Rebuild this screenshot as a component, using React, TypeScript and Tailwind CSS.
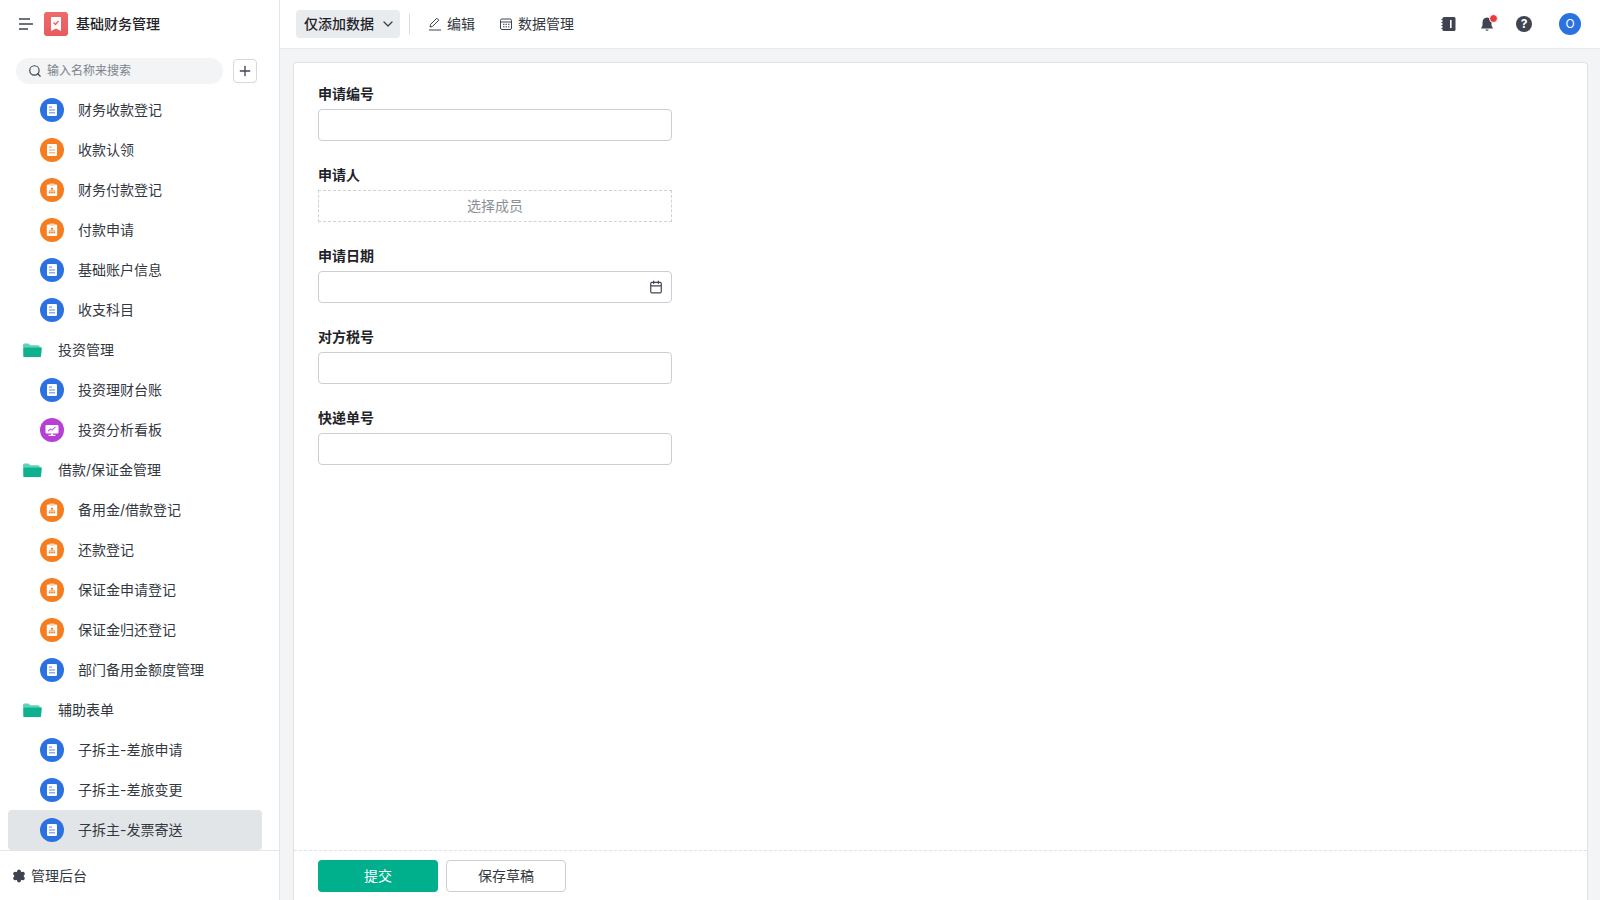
import { Calendar, ChevronDown, Search, Plus, Settings } from "lucide-react";

type Kind = "doc" | "docOrange" | "clip" | "board" | "folder";

const menu: { name: string; kind: Kind; active?: boolean }[] = [
    { name: "财务收款登记", kind: "doc" },
    { name: "收款认领", kind: "docOrange" },
    { name: "财务付款登记", kind: "clip" },
    { name: "付款申请", kind: "clip" },
    { name: "基础账户信息", kind: "doc" },
    { name: "收支科目", kind: "doc" },
    { name: "投资管理", kind: "folder" },
    { name: "投资理财台账", kind: "doc" },
    { name: "投资分析看板", kind: "board" },
    { name: "借款/保证金管理", kind: "folder" },
    { name: "备用金/借款登记", kind: "clip" },
    { name: "还款登记", kind: "clip" },
    { name: "保证金申请登记", kind: "clip" },
    { name: "保证金归还登记", kind: "clip" },
    { name: "部门备用金额度管理", kind: "doc" },
    { name: "辅助表单", kind: "folder" },
    { name: "子拆主-差旅申请", kind: "doc" },
    { name: "子拆主-差旅变更", kind: "doc" },
    { name: "子拆主-发票寄送", kind: "doc", active: true },
];

function Folder() {
    return (
        <svg width="20" height="16" viewBox="0 0 20 16" className="shrink-0">
            <path d="M1 3a1.5 1.5 0 0 1 1.500-1.500h4l1.800 1.800h8.200a1 1 0 0 1 1 1v1H1z" fill="#5fd3ba" />
            <path d="M2.200 5.200h16.600a1 1 0 0 1 1 1.100l-.8 7.900a1 1 0 0 1-1 .9H2.300a1 1 0 0 1-1-.9L1.200 6.300a1 1 0 0 1 1-1.100z" fill="#0db18e" />
        </svg>
    );
}

function MenuIcon({ kind }: { kind: Kind }) {
    if (kind === "doc" || kind === "docOrange") {
        const bg = kind === "doc" ? "#2b71e0" : "#f57c1f";
        const line = kind === "doc" ? "#7aa7ec" : "#f9b27c";
        return (
            <svg width="24" height="24" viewBox="0 0 24 24" className="shrink-0">
                <circle cx="12" cy="12" r="12" fill={bg} />
                <rect x="7" y="6" width="10" height="12" rx="1.200" fill="#fff" />
                <rect x="9" y="8.500" width="3" height="1.300" fill={line} />
                <rect x="9" y="11.300" width="6" height="1.300" fill={line} />
                <rect x="9" y="14.100" width="6" height="1.300" fill={line} />
            </svg>
        );
    }
    if (kind === "clip") {
        return (
            <svg width="24" height="24" viewBox="0 0 24 24" className="shrink-0">
                <circle cx="12" cy="12" r="12" fill="#f57c1f" />
                <rect x="6.800" y="6.500" width="10.400" height="11.500" rx="1.200" fill="#fff" />
                <rect x="9.500" y="5.500" width="5" height="2.200" rx=".5" fill="#fbd3b3" />
                <rect x="11" y="9.800" width="2" height="1.800" fill="#f57c1f" />
                <rect x="8.800" y="13.500" width="1.800" height="1.800" fill="#f57c1f" />
                <rect x="11.100" y="13.500" width="1.800" height="1.800" fill="#f57c1f" />
                <rect x="13.400" y="13.500" width="1.800" height="1.800" fill="#f57c1f" />
                <path d="M9.700 13.500v-1.200h4.600v1.200M12 11.600v.7" stroke="#f57c1f" strokeWidth=".6" fill="none" />
            </svg>
        );
    }
    return (
        <svg width="24" height="24" viewBox="0 0 24 24" className="shrink-0">
            <circle cx="12" cy="12" r="12" fill="#b83fd4" />
            <rect x="5.500" y="7" width="13" height="8.500" rx="1" fill="#fff" />
            <path d="M8 13l2.500-2 1.500 1 3.500-3" stroke="#c76be0" strokeWidth="1.100" fill="none" />
            <rect x="11" y="15.500" width="2" height="1.500" fill="#fff" />
            <rect x="8.500" y="16.800" width="7" height="1.100" rx=".5" fill="#fff" />
        </svg>
    );
}

function Sidebar() {
    return (
        <aside className="w-[280px] h-full shrink-0 flex flex-col bg-white border-r border-[#e3e5e8]">
            <div className="h-12 flex items-center pl-[19px] shrink-0">
                <svg width="14" height="12" viewBox="0 0 14 12">
                    <path d="M0 1h11M0 6h14M0 11h9" stroke="#3f4450" strokeWidth="1.600" />
                </svg>
                <div className="ml-[11px] w-6 h-6 rounded-[3px] bg-gradient-to-b from-[#ec6a6c] to-[#e95a5e] flex items-center justify-center">
                    <svg width="12" height="14" viewBox="0 0 12 14">
                        <path d="M1 0h10v14l-5-2.600L1 14z" fill="#fff" />
                        <path d="M3.500 5.500l2 2 3-3.500" stroke="#e95a5e" strokeWidth="1.200" fill="none" />
                    </svg>
                </div>
                <span className="ml-[8px] text-sm font-medium text-[#1f2329]">基础财务管理</span>
            </div>
            <div className="h-[42px] flex items-start pt-2.5 pl-4 shrink-0">
                <div className="w-[207px] h-[26px] rounded-full bg-[#f2f4f5] flex items-center pl-3">
                    <Search size={14} className="text-[#3f4450] shrink-0" />
                    <span className="ml-[5px] text-xs text-[#7d838c]">输入名称来搜索</span>
                </div>
                <div className="ml-2.5 mt-px w-6 h-6 rounded border border-[#d5d8dc] flex items-center justify-center">
                    <Plus size={16} className="text-[#3f4450]" />
                </div>
            </div>
            <div className="flex-1 overflow-hidden">
                {menu.map((item) =>
                    item.kind === "folder" ? (
                        <div key={item.name} className="h-10 mx-2 pl-3.5 flex items-center gap-4 text-sm text-[#33383f]">
                            <Folder />
                            <span>{item.name}</span>
                        </div>
                    ) : (
                        <div
                            key={item.name}
                            className={`h-10 ml-2 mr-[17px] pl-8 flex items-center gap-3.5 text-sm text-[#33383f] rounded ${item.active ? "bg-[#e2e5e8]" : ""}`}
                        >
                            <MenuIcon kind={item.kind} />
                            <span>{item.name}</span>
                        </div>
                    )
                )}
            </div>
            <div className="h-[50px] shrink-0 border-t border-[#e3e5e8] flex items-center pl-3 gap-[5px] text-sm text-[#33383f]">
                <Settings size={14} fill="#3f4450" className="text-[#3f4450]" />
                <span>管理后台</span>
            </div>
        </aside>
    );
}

function TopBar() {
    return (
        <header className="h-[49px] shrink-0 bg-white border-b border-[#e7e9eb] flex items-center pl-4 pr-[19px] text-sm text-[#33383f]">
            <div className="h-7 w-[104px] rounded bg-[#e9ecef] flex items-center pl-2 gap-1.5 font-medium text-[#1f2329]">
                <span>仅添加数据</span>
                <ChevronDown size={16} className="text-[#3f4450]" />
            </div>
            <div className="w-px h-5 bg-[#d9dcdf] ml-[9px] mr-[18px]" />
            <svg width="14" height="14" viewBox="0 0 14 14" fill="none" stroke="#3f4450" strokeWidth="1">
                <path d="M2 10l.6-2.600L8.800 1.200l2 2L4.600 9.400z" />
                <path d="M1 13h12" />
            </svg>
            <span className="ml-[5px]">编辑</span>
            <svg width="14" height="14" viewBox="0 0 14 14" fill="none" stroke="#3f4450" strokeWidth="1" className="ml-6">
                <rect x="1.500" y="2" width="11" height="10.500" rx="1.500" />
                <path d="M1.500 5h11M4 7.300h1.500M6.500 7.300h1.500M9 7.300h1.500M4 9.800h1.500M6.500 9.800h1.500M9 9.800h1.500" />
            </svg>
            <span className="ml-[5px]">数据管理</span>
            <div className="ml-auto flex items-center">
                <svg width="16" height="16" viewBox="0 0 16 16">
                    <rect x="1.500" y="1" width="13" height="14" rx="1.500" fill="#3f4450" />
                    <path d="M.5 3.500h2M.5 6.500h2M.5 9.500h2M.5 12.500h2" stroke="#3f4450" strokeWidth="1" />
                    <rect x="9" y="4" width="1.600" height="8" fill="#fff" />
                </svg>
                <div className="relative ml-[22px] w-4 h-4">
                    <svg width="16" height="16" viewBox="0 0 16 16">
                        <path d="M8 1.500c-3 0-4.500 2.200-4.500 5v3L2 12.500h12l-1.500-3v-3c0-2.800-1.500-5-4.500-5z" fill="#3f4450" />
                        <path d="M6.300 13.500a1.800 1.800 0 0 0 3.400 0z" fill="#3f4450" />
                    </svg>
                    <div className="absolute -top-0.5 right-[-3px] w-[7px] h-[7px] rounded-full bg-[#ea3b3b] border border-white box-content" />
                </div>
                <div className="ml-[21px] w-4 h-4 rounded-full bg-[#3f4450] text-white text-xs font-bold flex items-center justify-center">?</div>
                <div className="ml-[27px] w-[22px] h-[22px] rounded-full bg-[#2b71e0] text-white text-xs flex items-center justify-center">O</div>
            </div>
        </header>
    );
}

function Field({ label, children }: { label: string; children: React.ReactNode }) {
    return (
        <div className="mb-[23px]">
            <div className="h-[22px] mb-1 text-sm leading-[22px] font-semibold text-[#1f2329]">{label}</div>
            {children}
        </div>
    );
}

const inputCls = "w-[354px] h-8 rounded border border-[#ccced2] bg-white";

export default function App() {
    return (
        <div className="w-full h-screen flex overflow-hidden bg-[#f2f4f5] font-['Inter','Noto_Sans_CJK_SC',sans-serif]">
            <Sidebar />
            <div className="flex-1 flex flex-col min-w-0">
                <TopBar />
                <main className="flex-1 min-h-0 pt-[13px] pl-[13px] pr-[12px]">
                    <div className="h-full bg-white border border-b-0 border-[#dfe1e4] rounded-t flex flex-col">
                        <div className="flex-1 pt-5 pl-6">
                            <Field label="申请编号">
                                <div className={inputCls} />
                            </Field>
                            <Field label="申请人">
                                <div className="w-[354px] h-8 border border-dashed border-[#cfd1d5] flex items-center justify-center text-sm text-[#8b9097]">
                                    选择成员
                                </div>
                            </Field>
                            <Field label="申请日期">
                                <div className={`${inputCls} flex items-center justify-end pr-2`}>
                                    <Calendar size={14} className="text-[#3f4450]" />
                                </div>
                            </Field>
                            <Field label="对方税号">
                                <div className={inputCls} />
                            </Field>
                            <Field label="快递单号">
                                <div className={inputCls} />
                            </Field>
                        </div>
                        <div className="h-[50px] shrink-0 border-t border-dashed border-[#dfe1e4] flex items-start pt-[9px] pl-6 gap-2 text-sm">
                            <button className="w-[120px] h-8 rounded bg-[#00b08c] text-white">提交</button>
                            <button className="w-[120px] h-8 rounded border border-[#ccced2] text-[#33383f]">保存草稿</button>
                        </div>
                    </div>
                </main>
            </div>
        </div>
    );
}
